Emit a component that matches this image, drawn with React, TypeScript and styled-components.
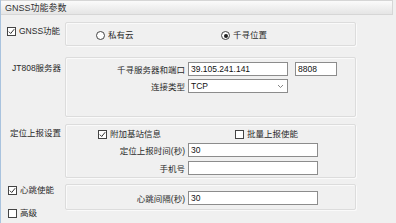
import React from "react";
import styled, { createGlobalStyle } from "styled-components";

const GlobalStyle = createGlobalStyle`
  html, body {
    margin: 0;
    padding: 0;
    background: #f0f0f0;
  }
  body {
    font-family: "Liberation Sans", "Noto Sans CJK SC", sans-serif;
    font-size: 8.5px;
    color: #2a2a2a;
  }
`;

const Panel = styled.div`
  width: 396px;
  height: 223px;
  box-sizing: border-box;
  border-left: 1px solid #a9c3de;
  background: #f0f0f0;
  overflow: hidden;
`;

const TitleBar = styled.div`
  height: 15px;
  margin-right: 3px;
  box-sizing: border-box;
  border: 1px solid #d6d6d6;
  border-left: none;
  background: linear-gradient(#fbfbfb, #e5e5e5);
  padding-left: 4px;
  display: flex;
  align-items: center;
  font-size: 9px;
  color: #333;
`;

const Row = styled.div<{ $top: number }>`
  display: grid;
  grid-template-columns: 64px 291px;
  align-items: start;
  margin-top: ${(p) => p.$top}px;
`;

const Side = styled.div<{ $pad: number; $indent: number }>`
  display: flex;
  flex-direction: column;
  gap: 12px;
  padding-top: ${(p) => p.$pad}px;
  padding-left: ${(p) => p.$indent}px;
`;

const SideText = styled.div`
  height: 11px;
  line-height: 11px;
  white-space: nowrap;
`;

const Group = styled.div<{ $h: number; $pad: number }>`
  box-sizing: border-box;
  height: ${(p) => p.$h}px;
  padding-top: ${(p) => p.$pad}px;
  border: 1px solid #dcdcdc;
  border-radius: 2px;
  box-shadow: inset 1px 1px 0 #fafafa, 1px 1px 0 #fafafa;
  display: flex;
  flex-direction: column;
`;

const OptionRow = styled.div<{ $left: number; $second: number }>`
  display: grid;
  grid-template-columns: ${(p) => p.$second}px auto;
  padding-left: ${(p) => p.$left}px;
  height: 11px;
  align-items: center;
`;

const Option = styled.label`
  display: flex;
  align-items: center;
  gap: 3px;
  white-space: nowrap;
  line-height: 11px;
`;

const Box = styled.span`
  width: 9px;
  height: 9px;
  box-sizing: border-box;
  border: 1px solid #444;
  background: #fff;
  display: inline-flex;
  align-items: center;
  justify-content: center;
  flex: none;
`;

const Round = styled.span<{ $on: boolean }>`
  width: 9px;
  height: 9px;
  box-sizing: border-box;
  border: 1px solid #444;
  border-radius: 50%;
  background: #fff;
  display: inline-flex;
  align-items: center;
  justify-content: center;
  flex: none;
  &::after {
    content: "";
    width: 4px;
    height: 4px;
    border-radius: 50%;
    background: ${(p) => (p.$on ? "#222" : "transparent")};
  }
`;

const Fields = styled.div<{ $gap: number; $top?: number }>`
  display: flex;
  flex-direction: column;
  gap: ${(p) => p.$gap}px;
  margin-top: ${(p) => p.$top ?? 0}px;
`;

const Field = styled.div`
  display: grid;
  grid-template-columns: 119px auto auto;
  column-gap: 3px;
  align-items: center;
  justify-content: start;
`;

const FieldLabel = styled.span`
  text-align: right;
  white-space: nowrap;
`;

const Input = styled.div<{ $w: number; $ml?: number }>`
  box-sizing: border-box;
  width: ${(p) => p.$w}px;
  height: 14px;
  margin-left: ${(p) => p.$ml ?? 0}px;
  border: 1px solid #8c8c8c;
  background: #fff;
  padding-left: 2px;
  display: flex;
  align-items: center;
  justify-content: space-between;
  color: #111;
`;

const Check = ({ on }: { on: boolean }) => (
  <Box>
    {on && (
      <svg width="7" height="7" viewBox="0 0 7 7">
        <path d="M0.8 3.6 L2.7 5.5 L6.2 1.2" fill="none" stroke="#333" strokeWidth="1" />
      </svg>
    )}
  </Box>
);

const Chevron = () => (
  <svg width="7" height="5" viewBox="0 0 7 5" style={{ marginRight: 3 }}>
    <path d="M1 1 L3.5 3.5 L6 1" fill="none" stroke="#777" strokeWidth="0.9" />
  </svg>
);

export default function App() {
  return (
    <>
      <GlobalStyle />
      <Panel>
        <TitleBar>GNSS功能参数</TitleBar>

        <Row $top={7}>
          <Side $pad={4} $indent={6}>
            <Option>
              <Check on />
              GNSS功能
            </Option>
          </Side>
          <Group $h={24} $pad={7}>
            <OptionRow $left={30} $second={125}>
              <Option>
                <Round $on={false} />
                私有云
              </Option>
              <Option>
                <Round $on />
                千寻位置
              </Option>
            </OptionRow>
          </Group>
        </Row>

        <Row $top={11}>
          <Side $pad={6} $indent={11}>
            <SideText>JT808服务器</SideText>
          </Side>
          <Group $h={60} $pad={4}>
            <Fields $gap={3}>
              <Field>
                <FieldLabel>千寻服务器和端口</FieldLabel>
                <Input $w={100}>39.105.241.141</Input>
                <Input $w={42} $ml={4}>8808</Input>
              </Field>
              <Field>
                <FieldLabel>连接类型</FieldLabel>
                <Input $w={100}>
                  TCP
                  <Chevron />
                </Input>
              </Field>
            </Fields>
          </Group>
        </Row>

        <Row $top={7}>
          <Side $pad={4} $indent={9}>
            <SideText>定位上报设置</SideText>
          </Side>
          <Group $h={54} $pad={4}>
            <OptionRow $left={32} $second={137}>
              <Option>
                <Check on />
                附加基站信息
              </Option>
              <Option>
                <Check on={false} />
                批量上报使能
              </Option>
            </OptionRow>
            <Fields $gap={4} $top={3}>
              <Field>
                <FieldLabel>定位上报时间(秒)</FieldLabel>
                <Input $w={130}>30</Input>
              </Field>
              <Field>
                <FieldLabel>手机号</FieldLabel>
                <Input $w={130} />
              </Field>
            </Fields>
          </Group>
        </Row>

        <Row $top={6}>
          <Side $pad={1} $indent={7}>
            <Option>
              <Check on />
              心跳使能
            </Option>
            <Option>
              <Check on={false} />
              高级
            </Option>
          </Side>
          <Group $h={26} $pad={6}>
            <Field>
              <FieldLabel>心跳间隔(秒)</FieldLabel>
              <Input $w={130}>30</Input>
            </Field>
          </Group>
        </Row>
      </Panel>
    </>
  );
}
